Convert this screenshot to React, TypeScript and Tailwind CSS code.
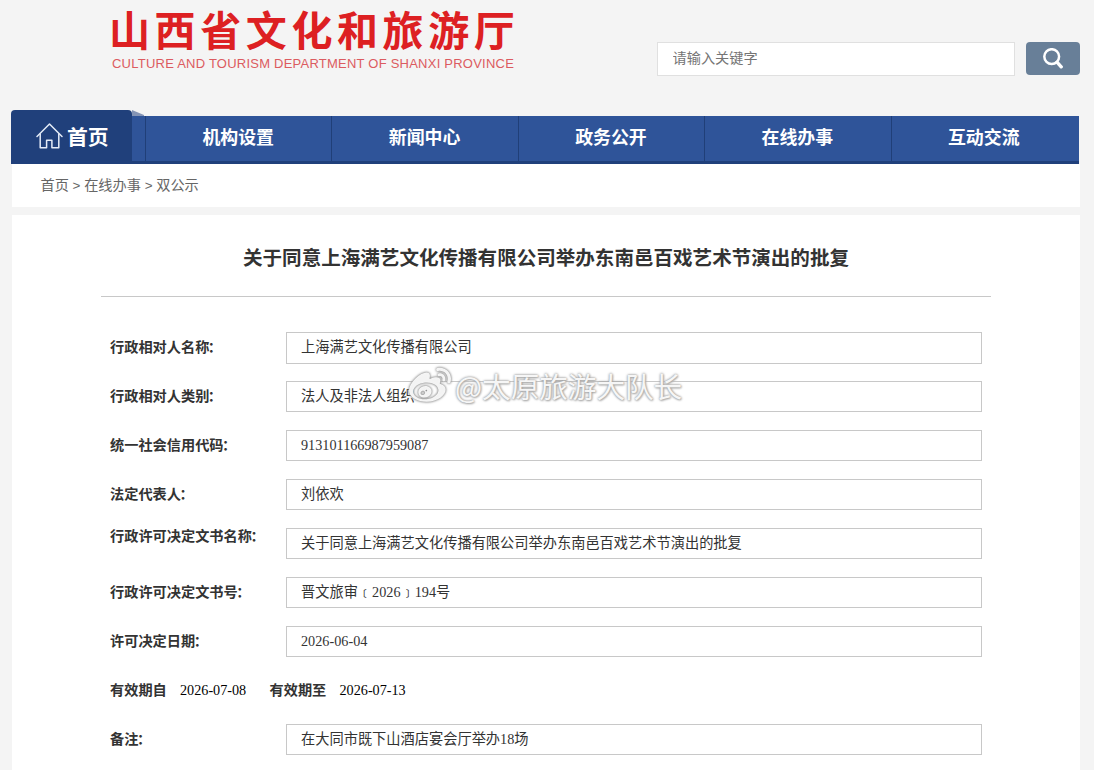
import * as React from "react";
import { FaWeibo } from "react-icons/fa";
import clsx from "clsx";

const NAV_ITEMS = ["机构设置", "新闻中心", "政务公开", "在线办事", "互动交流"];

const TITLE = "关于同意上海满艺文化传播有限公司举办东南邑百戏艺术节演出的批复";

type Field = {
  label: string;
  value: string;
  raised?: boolean;
  tall?: boolean;
};

const FIELDS: Field[] = [
  { label: "行政相对人名称", value: "上海满艺文化传播有限公司", tall: true },
  { label: "行政相对人类别", value: "法人及非法人组织" },
  { label: "统一社会信用代码", value: "913101166987959087" },
  { label: "法定代表人", value: "刘依欢" },
  { label: "行政许可决定文书名称", value: TITLE, raised: true },
  { label: "行政许可决定文书号", value: "晋文旅审﹝2026﹞194号" },
  { label: "许可决定日期", value: "2026-06-04" },
];

function HomeIcon() {
  return (
    <svg
      viewBox="0 0 27 26"
      className="h-[26px] w-[27px] shrink-0"
      fill="none"
      stroke="#e4ebf7"
      strokeWidth="1.5"
      strokeLinejoin="round"
      strokeLinecap="round"
    >
      <path d="M1 13.5 13.5 1 26 13.5" />
      <path d="M4.2 11V24.8H10.6V17.2H15.9V24.8H22.8V11" />
    </svg>
  );
}

function SearchIcon() {
  return (
    <svg viewBox="0 0 20 21" className="h-[21px] w-5" fill="none" stroke="#fff">
      <circle cx="8.7" cy="8.6" r="7.4" strokeWidth="2.5" />
      <path d="M14 14.2 18.2 18.8" strokeWidth="3.4" strokeLinecap="round" />
    </svg>
  );
}

function Header() {
  return (
    <header className="flex h-[110px] justify-between pl-[109px] pr-[14px]">
      <div className="w-[420px]">
        <h1 className="h-[56px] whitespace-nowrap text-[41px] font-bold leading-[57px] tracking-[4.6px] text-[#dd2022]">
          山西省文化和旅游厅
        </h1>
        <p className="ml-[3px] whitespace-nowrap font-['Liberation_Sans'] text-[13px] leading-[16px] tracking-[0.23px] text-[#dc5b60]">
          CULTURE AND TOURISM DEPARTMENT OF SHANXI PROVINCE
        </p>
      </div>
      <div className="flex gap-[11px] pt-[42px]">
        <input
          placeholder="请输入关键字"
          className="h-[34px] w-[358px] border border-[#e0e0e0] bg-white pb-[5px] pl-[14.5px] text-[14.2px] placeholder:text-[#757575]"
        />
        <button className="flex h-[33px] w-[54px] items-center justify-center rounded-[4px] bg-[#687f98]">
          <SearchIcon />
        </button>
      </div>
    </header>
  );
}

function Nav() {
  return (
    <nav className="ml-[11px] flex h-[54px] w-[1068px] items-end text-white">
      <a className="flex h-[54px] w-[121px] items-center gap-[4px] rounded-t-[4px] bg-[#20407b] pb-[3px] pl-[25px]">
        <HomeIcon />
        <span className="whitespace-nowrap text-[20.8px] font-bold leading-[30px]">首页</span>
      </a>
      <div className="flex h-[54px] w-[13px] flex-col">
        <svg viewBox="0 0 13 6" className="h-[6px] w-[13px]">
          <path d="M0 0 12 5V6H0Z" fill="#8494b5" />
        </svg>
        <div className="h-[48px] border-b-[3px] border-[#20407b] bg-[#2f5499]" />
      </div>
      <div className="flex h-[48px] flex-1 border-b-[3px] border-[#20407b] bg-[#2f5499]">
        {NAV_ITEMS.map((item) => (
          <a
            key={item}
            className="w-[186.4px] border-l border-[#203f78] pr-[1px] text-center text-[17.9px] font-bold leading-[41px]"
          >
            {item}
          </a>
        ))}
      </div>
    </nav>
  );
}

function Row({ label, value, raised, tall }: Field) {
  return (
    <div className="flex h-[49px] text-[14.2px] text-[#333]">
      <div
        className={clsx(
          "w-[176px] whitespace-nowrap font-bold",
          raised ? "leading-[14px]" : "leading-[28px]",
        )}
      >
        {label}
        <span className="-ml-[1.5px]">：</span>
      </div>
      <div
        className={clsx(
          "w-[696px] border border-[#c8c8c8] pl-[14px] font-['Liberation_Serif','Noto_Sans_CJK_SC',serif] text-[14.22px] leading-[28px]",
          tall ? "h-[32px]" : "h-[31px]",
        )}
      >
        {value}
      </div>
    </div>
  );
}

function Period() {
  return (
    <div className="flex h-[49px] whitespace-nowrap text-[14.2px] leading-[28px]">
      <b className="w-[70px] text-[#333]">有效期自</b>
      <span className="w-[89.5px] font-['Liberation_Serif',serif] leading-[30px] text-black">2026-07-08</span>
      <b className="w-[70px] text-[#333]">有效期至</b>
      <span className="font-['Liberation_Serif',serif] leading-[30px] text-black">2026-07-13</span>
    </div>
  );
}

function Watermark() {
  return (
    <div className="pointer-events-none absolute left-[409px] top-[365px] flex items-center whitespace-nowrap text-white/90">
      <FaWeibo className="h-[42px] w-[42px] [filter:drop-shadow(0_0_1px_#888)_drop-shadow(0_0_1px_#aaa)]" />
      <span className="ml-[4px] text-[28.6px] leading-[42px] [text-shadow:0_0_2px_#999,0_0_3px_#aaa,1px_1px_2px_#bbb]">
        @太原旅游大队长
      </span>
    </div>
  );
}

export default function App() {
  return (
    <div className="relative h-[770px] w-[1094px] overflow-hidden bg-[#f4f4f4] font-['Noto_Sans_CJK_SC',sans-serif]">
      <Header />
      <Nav />
      <div className="ml-[12px] h-[43px] w-[1068px] bg-white pl-[28.5px] text-[14.2px] leading-[40px] text-[#666]">
        首页<span className="font-['Liberation_Sans'] text-[13.4px]"> &gt; </span>在线办事
        <span className="font-['Liberation_Sans'] text-[13.4px]"> &gt; </span>双公示
      </div>
      <main className="ml-[12px] mt-[8px] h-[555px] w-[1068px] bg-white px-[89px]">
        <h2 className="h-[82px] whitespace-nowrap border-b border-[#c8c8c8] text-center text-[19.56px] font-bold leading-[83px] text-[#333]">
          {TITLE}
        </h2>
        <div className="pl-[9px] pt-[35px]">
          {FIELDS.map((field) => (
            <Row key={field.label} {...field} />
          ))}
          <Period />
          <Row label="备注" value="在大同市既下山酒店宴会厅举办18场" />
        </div>
      </main>
      <Watermark />
    </div>
  );
}
